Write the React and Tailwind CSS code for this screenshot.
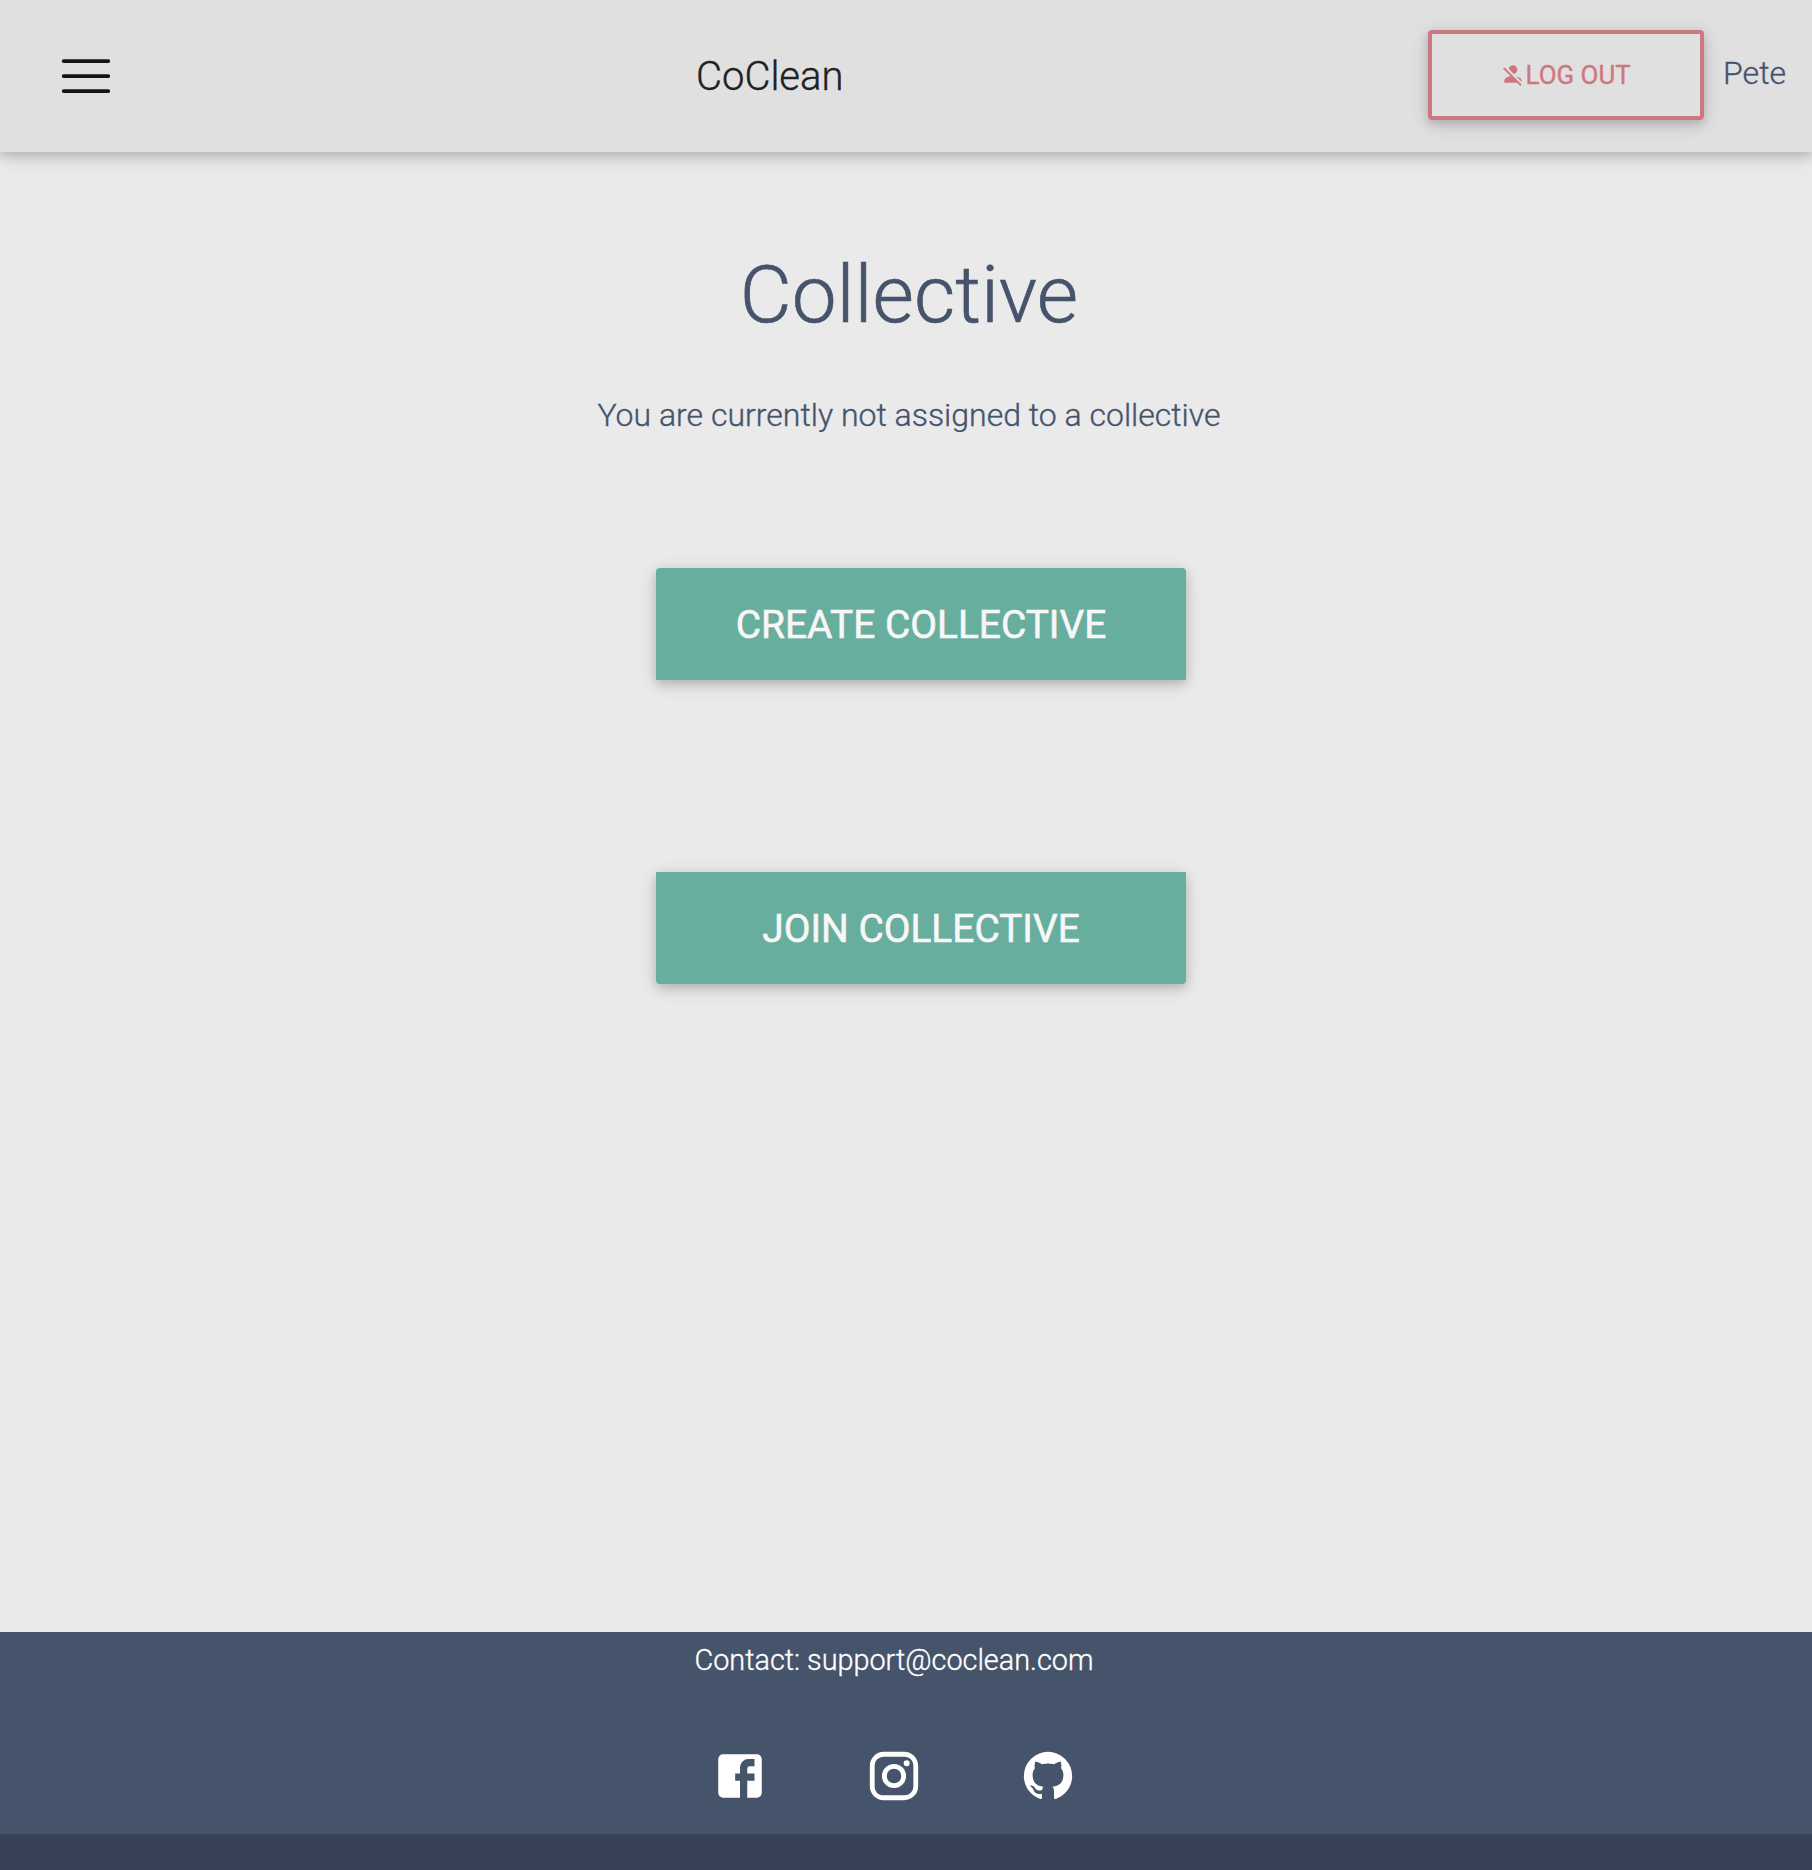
import React from "react";

const facebook =
  "M5,3H19A2,2 0 0,1 21,5V19A2,2 0 0,1 19,21H5A2,2 0 0,1 3,19V5A2,2 0 0,1 5,3M18,5H15.5A3.5,3.5 0 0,0 12,8.5V11H10V14H12V21H15V14H18V11H15V9A1,1 0 0,1 16,8H18V5Z";
const instagram =
  "M7.8,2H16.2C19.4,2 22,4.6 22,7.8V16.2A5.8,5.8 0 0,1 16.2,22H7.8C4.6,22 2,19.4 2,16.2V7.8A5.8,5.8 0 0,1 7.8,2M7.6,4A3.6,3.6 0 0,0 4,7.6V16.4C4,18.39 5.61,20 7.6,20H16.4A3.6,3.6 0 0,0 20,16.4V7.6C20,5.61 18.39,4 16.4,4H7.6M17.25,5.5A1.25,1.25 0 0,1 18.5,6.75A1.25,1.25 0 0,1 17.25,8A1.25,1.25 0 0,1 16,6.75A1.25,1.25 0 0,1 17.25,5.5M12,7A5,5 0 0,1 17,12A5,5 0 0,1 12,17A5,5 0 0,1 7,12A5,5 0 0,1 12,7M12,9A3,3 0 0,0 9,12A3,3 0 0,0 12,15A3,3 0 0,0 15,12A3,3 0 0,0 12,9Z";
const github =
  "M12,2A10,10 0 0,0 2,12C2,16.42 4.87,20.17 8.84,21.5C9.34,21.58 9.5,21.27 9.5,21C9.5,20.77 9.5,20.14 9.5,19.31C6.73,19.91 6.14,17.97 6.14,17.97C5.68,16.81 5.03,16.5 5.03,16.5C4.12,15.88 5.1,15.9 5.1,15.9C6.1,15.97 6.63,16.93 6.63,16.93C7.5,18.45 8.97,18 9.54,17.76C9.63,17.11 9.89,16.67 10.17,16.42C7.95,16.17 5.62,15.31 5.62,11.5C5.62,10.39 6,9.5 6.65,8.79C6.55,8.54 6.2,7.5 6.75,6.15C6.75,6.15 7.59,5.88 9.5,7.17C10.29,6.95 11.15,6.84 12,6.84C12.85,6.84 13.71,6.95 14.5,7.17C16.41,5.88 17.25,6.15 17.25,6.15C17.8,7.5 17.45,8.54 17.35,8.79C18,9.5 18.38,10.39 18.38,11.5C18.38,15.32 16.04,16.16 13.81,16.41C14.17,16.72 14.5,17.33 14.5,18.26C14.5,19.6 14.5,20.68 14.5,21C14.5,21.27 14.66,21.59 15.17,21.5C19.14,20.16 22,16.42 22,12A10,10 0 0,0 12,2Z";
const accountOff =
  "M12,4A4,4 0 0,1 16,8C16,9.95 14.6,11.58 12.75,11.93L8.07,7.25C8.42,5.4 10.05,4 12,4M12.28,14L18.28,20L20,21.72L18.73,23L15.73,20H4V18C4,16.16 6.5,14.61 9.87,14.14L2.78,7.05L4.05,5.78L12.28,14M20,18V19.18L15.14,14.32C18,14.93 20,16.35 20,18Z";

function Icon({ d, className }) {
  return (
    <svg viewBox="0 0 24 24" fill="currentColor" fillRule="evenodd" className={className}>
      <path d={d} />
    </svg>
  );
}

function Header() {
  return (
    <header className="flex h-[152px] bg-[#e0e0e0] shadow-[0_4px_10px_0_rgba(0,0,0,0.16),0_4px_20px_0_rgba(0,0,0,0.12)]">
      <button aria-label="Menu" className="ml-[62px] mt-[59px] h-[34px] w-12">
        <svg viewBox="0 0 48 34" className="h-[34px] w-12 overflow-visible" stroke="#141414" strokeWidth="3.8" strokeLinecap="round">
          <path d="M1.7 2.1H46.3M1.7 17.1H46.3M1.7 32.1H46.3" />
        </svg>
      </button>
      <div className="ml-[586px] mt-[47px] w-[200px] whitespace-nowrap text-[40px] leading-[60px] text-[#212121]">CoClean</div>
      <div className="ml-auto flex">
        <button className="mt-[30px] flex h-[90px] w-[276px] items-center justify-center rounded-[4px] border-4 border-[#cd7780] pr-0.5 text-[25.92px] font-normal text-[#cd7780] shadow-[0_4px_10px_0_rgba(0,0,0,0.16),0_4px_20px_0_rgba(0,0,0,0.12)]">
          <Icon d={accountOff} className="mb-0.5 h-[26px] w-[26px]" />
          <span>LOG OUT</span>
        </button>
        <span className="ml-[19px] mr-[26px] mt-[49px] text-[32px] leading-[48px]">Pete</span>
      </div>
    </header>
  );
}

function Footer() {
  return (
    <footer className="mt-auto bg-[#45536b] text-white">
      <div className="flex h-[202px] flex-col">
        <p className="ml-[694.5px] mt-[6px] whitespace-nowrap text-[28.8px] leading-[44px]">Contact: support@coclean.com</p>
        <div className="ml-[711.2px] mt-[65px] flex gap-24">
          <Icon d={facebook} className="h-[58px] w-[58px]" />
          <Icon d={instagram} className="h-[58px] w-[58px]" />
          <Icon d={github} className="h-[58px] w-[58px]" />
        </div>
      </div>
      <div className="h-9 bg-[#374256]" />
    </footer>
  );
}

export default function App() {
  const button =
    "flex h-28 w-[530px] items-center justify-center bg-[#67ae9f] pt-0.5 text-[38.88px] font-normal text-[#f7f7f7] shadow-[0_4px_10px_0_rgba(0,0,0,0.16),0_4px_20px_0_rgba(0,0,0,0.12)] [-webkit-text-stroke:0.6px]";
  return (
    <div className="flex h-[1870px] w-[1812px] flex-col bg-[#eaeaea] font-['Roboto',sans-serif] font-light text-[#45536b] [-webkit-text-stroke:0.35px]">
      <Header />
      <main className="flex flex-col items-center">
        <h1 className="ml-[6px] mt-[95px] text-[80px] leading-[96px] [-webkit-text-stroke:0.6px]">Collective</h1>
        <p className="ml-[6px] mt-12 text-[32px] leading-[48px]">You are currently not assigned to a collective</p>
        <div className="ml-[30px] mt-[129px] flex flex-col gap-48">
          <button className={button + " rounded-t-[4px]"}>CREATE COLLECTIVE</button>
          <button className={button + " rounded-b-[4px]"}>JOIN COLLECTIVE</button>
        </div>
      </main>
      <Footer />
    </div>
  );
}
